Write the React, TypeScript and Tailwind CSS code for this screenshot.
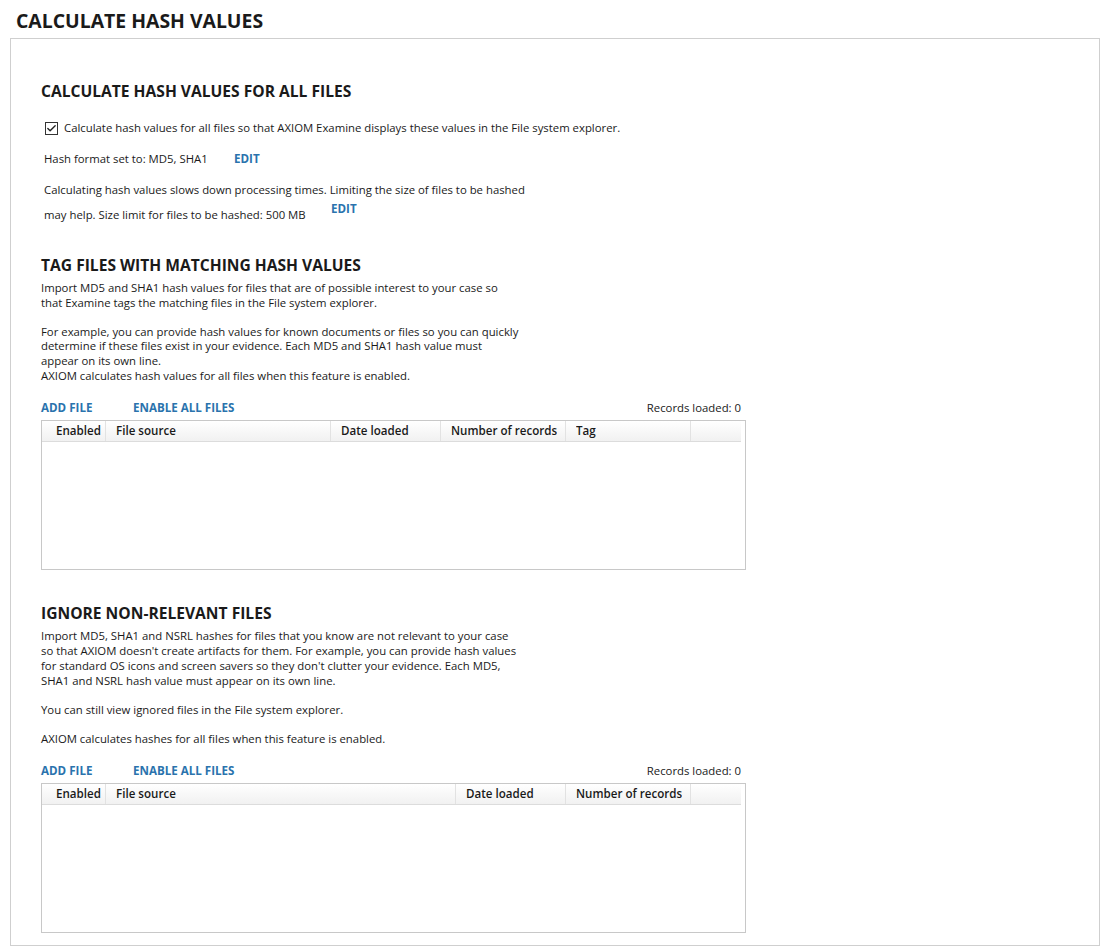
import { Check } from 'lucide-react'

const font = { fontFamily: '"Open Sans", "Noto Sans", sans-serif' }

type Col = { label: string; w: string }

const tagCols: Col[] = [
  { label: 'Enabled', w: 'w-[64px]' },
  { label: 'File source', w: 'w-[225px]' },
  { label: 'Date loaded', w: 'w-[110px]' },
  { label: 'Number of records', w: 'w-[125px]' },
  { label: 'Tag', w: 'w-[125px]' },
  { label: '', w: 'flex-1' },
]

const ignoreCols: Col[] = [
  { label: 'Enabled', w: 'w-[64px]' },
  { label: 'File source', w: 'w-[350px]' },
  { label: 'Date loaded', w: 'w-[110px]' },
  { label: 'Number of records', w: 'w-[125px]' },
  { label: '', w: 'flex-1' },
]

export default function App() {
  return (
    <div className="bg-white text-[#1a1a1a] min-h-[949px] w-[1104px] pt-[9px]" style={font}>
      <h1 className="pl-4 text-[19.4px] font-bold leading-[24px] h-[29px]">CALCULATE HASH VALUES</h1>
      <div className="ml-[10px] mr-[4px] border border-[#cfcfcf] h-[908px] pl-[30px] pt-[42px]">
        <SectionTitle>CALCULATE HASH VALUES FOR ALL FILES</SectionTitle>

        <div className="mt-[19px] flex items-center gap-[6px] pl-[4px] text-[11.35px] leading-[16px]">
          <span className="w-[13px] h-[13px] border border-[#333] flex items-center justify-center bg-white">
            <Check size={11} strokeWidth={3} className="text-[#222]" />
          </span>
          <span>Calculate hash values for all files so that AXIOM Examine displays these values in the File system explorer.</span>
        </div>

        <div className="mt-[15px] flex items-center text-[11.35px] leading-[16px] pl-[3px]">
          <span className="w-[190px]">Hash format set to: MD5, SHA1</span>
          <Link>EDIT</Link>
        </div>

        <div className="mt-[15px] pl-[3px] text-[11.35px]">
          <div className="leading-[16px]">Calculating hash values slows down processing times. Limiting the size of files to be hashed</div>
          <div className="flex items-start mt-[3px]">
            <span className="leading-[16px] mt-[6px] w-[287px]">may help. Size limit for files to be hashed: 500 MB</span>
            <Link>EDIT</Link>
          </div>
        </div>

        <div className="mt-[32px]">
          <SectionTitle>TAG FILES WITH MATCHING HASH VALUES</SectionTitle>
        </div>
        <div className="mt-[6px] text-[11.35px] leading-[14.6px] whitespace-nowrap">
          <p>Import MD5 and SHA1 hash values for files that are of possible interest to your case so<br />that Examine tags the matching files in the File system explorer.</p>
          <p className="mt-[14.6px]">For example, you can provide hash values for known documents or files so you can quickly<br />determine if these files exist in your evidence. Each MD5 and SHA1 hash value must<br />appear on its own line.</p>
          <p>AXIOM calculates hash values for all files when this feature is enabled.</p>
        </div>

        <Toolbar className="mt-[17px]" />
        <Grid cols={tagCols} />

        <div className="mt-[33px]">
          <SectionTitle>IGNORE NON-RELEVANT FILES</SectionTitle>
        </div>
        <div className="mt-[6px] text-[11.35px] leading-[14.8px] whitespace-nowrap">
          <p>Import MD5, SHA1 and NSRL hashes for files that you know are not relevant to your case<br />so that AXIOM doesn't create artifacts for them. For example, you can provide hash values<br />for standard OS icons and screen savers so they don't clutter your evidence. Each MD5,<br />SHA1 and NSRL hash value must appear on its own line.</p>
          <p className="mt-[14.6px]">You can still view ignored files in the File system explorer.</p>
          <p className="mt-[14.6px]">AXIOM calculates hashes for all files when this feature is enabled.</p>
        </div>

        <Toolbar className="mt-[16px]" />
        <Grid cols={ignoreCols} />
      </div>
    </div>
  )
}

function SectionTitle({ children }: { children: React.ReactNode }) {
  return <h2 className="text-[15.6px] font-bold leading-[20px]">{children}</h2>
}

function Link({ children }: { children: React.ReactNode }) {
  return <span className="text-[#2a73ad] font-bold text-[11.6px] leading-[16px]">{children}</span>
}

function Toolbar({ className }: { className?: string }) {
  return (
    <div className={`flex items-center w-[700px] text-[11.35px] leading-[16px] ${className ?? ''}`}>
      <span className="w-[92px]"><Link>ADD FILE</Link></span>
      <Link>ENABLE ALL FILES</Link>
      <span className="ml-auto">Records loaded: 0</span>
    </div>
  )
}

function Grid({ cols }: { cols: Col[] }) {
  return (
    <div className="mt-[4px] w-[705px] h-[150px] border border-[#c8c8c8] pr-[4px] bg-white">
      <div className="flex h-[21px] bg-gradient-to-b from-white to-[#f1f1f1] border-b border-[#dcdcdc]">
        {cols.map((c, i) => (
          <div
            key={i}
            className={`${c.w} shrink-0 h-full flex items-center overflow-hidden whitespace-nowrap text-[11.6px] font-semibold ${i === 0 ? 'pl-[14px] pr-[2px]' : 'pl-[10px] pr-[6px]'} ${i < cols.length - 1 ? 'border-r border-[#e2e2e2]' : ''}`}
          >
            <span className="block overflow-hidden">{c.label}</span>
          </div>
        ))}
      </div>
    </div>
  )
}
